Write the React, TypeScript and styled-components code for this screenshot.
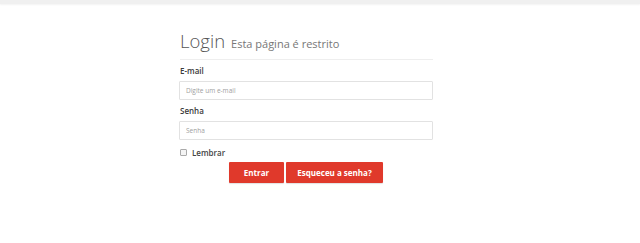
import React, { useState } from 'react';
import styled, { createGlobalStyle } from 'styled-components';

const GlobalStyle = createGlobalStyle`
  html, body {
    margin: 0;
    padding: 0;
    background: #fff;
    font-family: "Open Sans", "Liberation Sans", sans-serif;
    color: #333;
  }
  * {
    box-sizing: border-box;
  }
`

const TopBar = styled.div`
  height: 4px;
  background: #f0f0f0;
  box-shadow: 0 1px 2px rgba(0, 0, 0, 0.05);
`

const Page = styled.main`
  padding: 25px 0 40px 179px;
`

const Form = styled.form`
  width: 254px;
`

const Heading = styled.h1`
  margin: 0 0 0 1px;
  padding-bottom: 3px;
  border-bottom: 1px solid #eee;
  font-weight: 300;
  font-size: 18.5px;
  line-height: 24px;
  color: #555;
  white-space: nowrap;
`

const SubTitle = styled.small`
  font-size: 11px;
  font-weight: 400;
  color: #777;
  margin-left: 6px;
`

const Field = styled.div`
  margin-top: 5px;
`

const Label = styled.label`
  display: block;
  margin: 0 0 4px 1px;
  font-size: 8px;
  font-weight: 600;
  line-height: 12px;
  color: #3a3a3a;
`

const Input = styled.input`
  display: block;
  width: 100%;
  height: 19px;
  padding: 0 6px;
  border: 1px solid #e2e2e2;
  border-radius: 1px;
  font-family: inherit;
  font-size: 6.5px;
  color: #555;
  outline: none;

  &::placeholder {
    color: #a0a0a0;
  }
`

const CheckRow = styled.label`
  display: flex;
  align-items: center;
  gap: 5px;
  margin: 7px 0 0 1px;
  font-size: 8px;
  font-weight: 600;
  color: #444;
`

const Box = styled.span`
  width: 7px;
  height: 7px;
  border: 1px solid #aaa;
  border-radius: 1px;
  background: #f4f4f4;
`

const Actions = styled.div`
  display: flex;
  justify-content: center;
  gap: 2px;
  margin-top: 4px;
`

const Button = styled.button<{ wide?: boolean }>`
  height: 21px;
  padding: 0;
  width: ${({ wide }) => (wide ? '97px' : '55px')};
  border: none;
  border-radius: 1px;
  background: #e0392b;
  color: #fff;
  font-family: inherit;
  font-size: 8px;
  font-weight: 700;
  box-shadow: 0 1px 1px rgba(0, 0, 0, 0.12);
  cursor: pointer;
`

export default function App() {
  const [remember, setRemember] = useState(false)

  return (
    <>
      <GlobalStyle />
      <TopBar />
      <Page>
        <Form onSubmit={e => e.preventDefault()}>
          <Heading>
            Login<SubTitle>Esta página é restrito</SubTitle>
          </Heading>
          <Field>
            <Label>E-mail</Label>
            <Input type="email" placeholder="Digite um e-mail" />
          </Field>
          <Field>
            <Label>Senha</Label>
            <Input type="password" placeholder="Senha" />
          </Field>
          <CheckRow onClick={() => setRemember(!remember)}>
            <Box />
            Lembrar
          </CheckRow>
          <Actions>
            <Button type="submit">Entrar</Button>
            <Button type="button" wide>Esqueceu a senha?</Button>
          </Actions>
        </Form>
      </Page>
    </>
  )
}
